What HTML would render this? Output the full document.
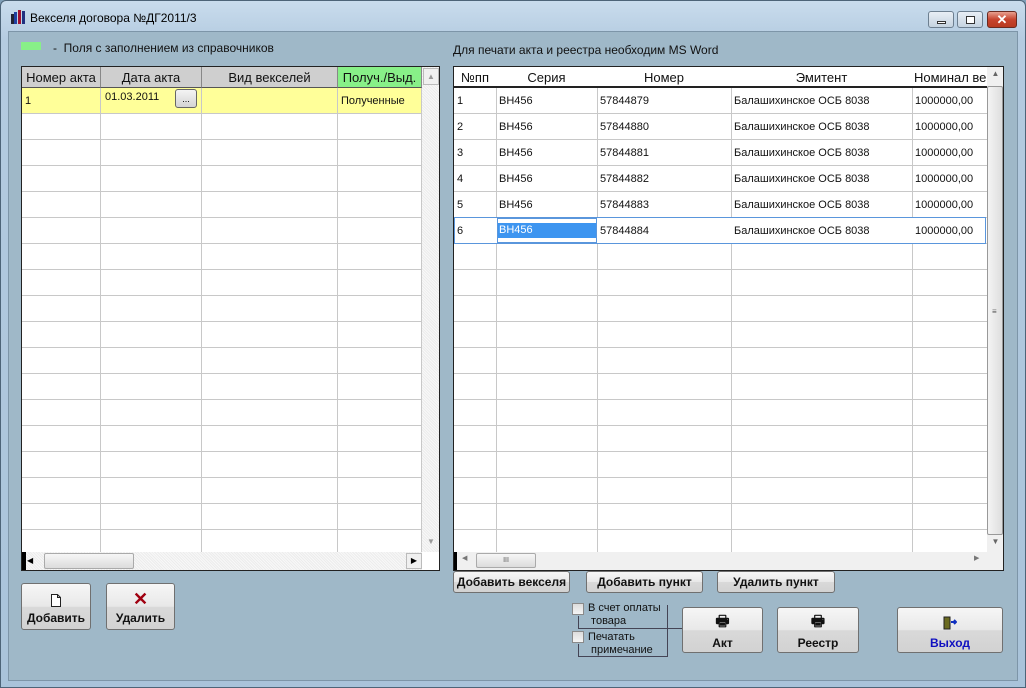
<!DOCTYPE html>
<html><head><meta charset="utf-8">
<style>
*{box-sizing:border-box;margin:0;padding:0}
body{width:1026px;height:688px;overflow:hidden;font-family:"Liberation Sans",sans-serif;background:#7f9fb8;position:relative}
.abs{position:absolute}
.win{left:0;top:0;width:1026px;height:688px;background:linear-gradient(#c9dced,#b4cbe0 40px,#a9c3da);border:1px solid #4d6478;border-radius:6px 6px 0 0}
.client{left:8px;top:31px;width:1010px;height:650px;background:#9fb8c8;border:1px solid #7d95a8}
.grid{background:#fff;border:1px solid #222;overflow:hidden}
.hd{background:#cfcfcf;border-right:1px solid #888;border-bottom:1px solid #555;height:21px;font-size:13px;text-align:center;line-height:21px;color:#111;position:absolute;top:0}
.vl{position:absolute;width:1px;background:#c8c8c8;top:21px;bottom:18px}
.rows{position:absolute;left:0;top:21px;bottom:18px;background:repeating-linear-gradient(#fff 0,#fff 25px,#c8c8c8 25px,#c8c8c8 26px)}
.c{position:absolute;font-size:11px;color:#111;height:26px;line-height:26px;padding-left:3px;white-space:nowrap}
.btn{position:absolute;background:linear-gradient(#f6f6f6,#e8e8e8 50%,#d9d9d9 51%,#d2d2d2);border:1px solid #707070;border-radius:3px;font-size:12px;font-weight:bold;text-align:center;color:#111}
.sb{position:absolute;background:#eaeaea}
.cb{position:absolute;width:12px;height:12px;border:1px solid #8a8a8a;background:linear-gradient(#ddd,#f5f5f5)}
.lbl{position:absolute;font-size:11px;color:#111;line-height:13px}
</style></head><body>
<div class="abs win"></div>
<svg class="abs" style="left:10px;top:9px" width="16" height="16"><rect x="1" y="5" width="3" height="10" fill="#223"/><rect x="4" y="3" width="3" height="12" fill="#2040a0"/><rect x="8" y="1" width="3" height="14" fill="#a01030"/><rect x="12" y="2" width="3" height="13" fill="#203080"/></svg>
<div class="abs" style="left:30px;top:11px;font-size:12px;color:#000">Векселя договора №ДГ2011/3</div>
<div class="abs" style="left:928px;top:11px;width:26px;height:17px;border:1px solid #6d7f90;border-radius:3px;background:linear-gradient(#e8eef5,#c5d3e0)"><div class="abs" style="left:8px;top:9px;width:9px;height:3px;border:1px solid #333;background:#fff"></div></div>
<div class="abs" style="left:957px;top:11px;width:26px;height:17px;border:1px solid #6d7f90;border-radius:3px;background:linear-gradient(#e8eef5,#c5d3e0)"><div class="abs" style="left:8px;top:4px;width:9px;height:8px;border:1px solid #333;background:#fff"></div></div>
<div class="abs" style="left:987px;top:11px;width:30px;height:17px;border:1px solid #6a2a20;border-radius:3px;background:linear-gradient(#e8a090,#c7442e 50%,#b83a20);color:#fff;font-weight:bold;font-size:13px;text-align:center;line-height:16px">✕</div>
<div class="abs client"></div>

<div class="abs" style="left:21px;top:42px;width:20px;height:8px;background:#88f088"></div>
<div class="abs" style="left:53px;top:41px;font-size:12px;color:#111">-&nbsp; Поля с заполнением из справочников</div>
<div class="abs" style="left:453px;top:43px;font-size:12px;color:#111">Для печати акта и реестра необходим MS Word</div>

<div class="abs grid" style="left:21px;top:66px;width:419px;height:505px">
 <div class="rows" style="width:400px"></div>
 <div class="abs" style="left:0;top:21px;width:400px;height:25px;background:#ffff99"></div>
 <div class="hd" style="left:0;width:79px">Номер акта</div>
 <div class="hd" style="left:79px;width:101px">Дата акта</div>
 <div class="hd" style="left:180px;width:136px">Вид векселей</div>
 <div class="hd" style="left:316px;width:84px;background:#88f088">Получ./Выд.</div>
 <div class="vl" style="left:78px"></div><div class="vl" style="left:179px"></div><div class="vl" style="left:315px"></div><div class="vl" style="left:399px"></div>
 <div class="c" style="left:0;top:21px">1</div>
 <div class="c" style="left:80px;top:17px">01.03.2011</div>
 <div class="abs" style="left:153px;top:22px;width:22px;height:19px;border:1px solid #666;border-radius:3px;background:linear-gradient(#f4f4f4,#d4d4d4);font-size:9px;text-align:center;line-height:18px">...</div>
 <div class="c" style="left:316px;top:21px">Полученные</div>
 <div class="sb" style="left:400px;top:0;width:18px;height:485px;background:repeating-linear-gradient(45deg,#ececec 0 1px,#f8f8f8 1px 2px)"></div>
 <div class="abs" style="left:401px;top:1px;width:16px;height:17px;border:1px solid #bbb;background:#f0f0f0;font-size:8px;color:#999;text-align:center;line-height:15px">▲</div>
 <div class="abs" style="left:401px;top:466px;width:16px;height:17px;font-size:8px;color:#999;text-align:center;line-height:17px">▼</div>
 <div class="sb" style="left:0;top:485px;width:400px;height:18px;background:repeating-linear-gradient(45deg,#ececec 0 1px,#f8f8f8 1px 2px)"></div>
 <div class="abs" style="left:0;top:485px;width:4px;height:18px;background:#000"></div>
 <div class="abs" style="left:5px;top:486px;font-size:8px;line-height:16px">◀</div>
 <div class="abs" style="left:22px;top:486px;width:90px;height:16px;border:1px solid #aaa;border-radius:2px;background:linear-gradient(#f6f6f6,#dcdcdc)"></div>
 <div class="abs" style="left:384px;top:486px;width:16px;height:16px;border:1px solid #bbb;background:#f0f0f0;font-size:8px;line-height:14px;text-align:center">▶</div>
</div>

<div class="abs grid" style="left:453px;top:66px;width:551px;height:505px">
 <div class="rows" style="width:533px"></div>
 <div class="hd" style="left:0;width:42px;background:#fff;border-right:none;border-bottom:2px solid #222">№пп</div>
 <div class="hd" style="left:42px;width:101px;background:#fff;border-right:none;border-bottom:2px solid #222">Серия</div>
 <div class="hd" style="left:143px;width:134px;background:#fff;border-right:none;border-bottom:2px solid #222">Номер</div>
 <div class="hd" style="left:277px;width:181px;background:#fff;border-right:none;border-bottom:2px solid #222">Эмитент</div>
 <div class="hd" style="left:458px;width:75px;background:#fff;border-right:none;border-bottom:2px solid #222;text-align:left;padding-left:2px;overflow:hidden;white-space:nowrap">Номинал ве</div>
 <div class="vl" style="left:42px"></div><div class="vl" style="left:143px"></div><div class="vl" style="left:277px"></div><div class="vl" style="left:458px"></div>
 <div class="c" style="left:0;top:21px">1</div><div class="c" style="left:42px;top:21px">ВН456</div><div class="c" style="left:143px;top:21px">57844879</div><div class="c" style="left:277px;top:21px">Балашихинское ОСБ 8038</div><div class="c" style="left:458px;top:21px">1000000,00</div>
 <div class="c" style="left:0;top:47px">2</div><div class="c" style="left:42px;top:47px">ВН456</div><div class="c" style="left:143px;top:47px">57844880</div><div class="c" style="left:277px;top:47px">Балашихинское ОСБ 8038</div><div class="c" style="left:458px;top:47px">1000000,00</div>
 <div class="c" style="left:0;top:73px">3</div><div class="c" style="left:42px;top:73px">ВН456</div><div class="c" style="left:143px;top:73px">57844881</div><div class="c" style="left:277px;top:73px">Балашихинское ОСБ 8038</div><div class="c" style="left:458px;top:73px">1000000,00</div>
 <div class="c" style="left:0;top:99px">4</div><div class="c" style="left:42px;top:99px">ВН456</div><div class="c" style="left:143px;top:99px">57844882</div><div class="c" style="left:277px;top:99px">Балашихинское ОСБ 8038</div><div class="c" style="left:458px;top:99px">1000000,00</div>
 <div class="c" style="left:0;top:125px">5</div><div class="c" style="left:42px;top:125px">ВН456</div><div class="c" style="left:143px;top:125px">57844883</div><div class="c" style="left:277px;top:125px">Балашихинское ОСБ 8038</div><div class="c" style="left:458px;top:125px">1000000,00</div>
 <div class="abs" style="left:0;top:150px;width:532px;height:27px;border:1px solid #5a96dc;background:#fff"></div>
 <div class="abs" style="left:43px;top:151px;width:100px;height:25px;border:1px solid #5a96dc;background:#fff"><div class="abs" style="left:0;top:4px;width:98px;height:15px;background:#3d95f0"></div></div>
 <div class="c" style="left:0;top:151px">6</div><div class="c" style="left:42px;top:150px;color:#fff">ВН456</div><div class="c" style="left:143px;top:151px">57844884</div><div class="c" style="left:277px;top:151px">Балашихинское ОСБ 8038</div><div class="c" style="left:458px;top:151px">1000000,00</div>
 <div class="sb" style="left:533px;top:0;width:17px;height:485px;background:#f0f0f0"></div>
 <div class="abs" style="left:533px;top:2px;width:17px;font-size:8px;color:#666;text-align:center">▲</div>
 <div class="abs" style="left:533px;top:19px;width:16px;height:449px;border:1px solid #999;border-radius:2px;background:linear-gradient(90deg,#f4f4f4,#dedede)"><div class="abs" style="left:4px;top:220px;font-size:8px;color:#555">≡</div></div>
 <div class="abs" style="left:533px;top:470px;width:17px;font-size:8px;color:#666;text-align:center">▼</div>
 <div class="sb" style="left:0;top:485px;width:550px;height:18px;background:#f0f0f0"></div>
 <div class="abs" style="left:0;top:485px;width:3px;height:18px;background:#000"></div>
 <div class="abs" style="left:8px;top:487px;font-size:7px;color:#777">◀</div>
 <div class="abs" style="left:22px;top:486px;width:60px;height:15px;border:1px solid #aaa;border-radius:2px;background:linear-gradient(#f6f6f6,#dcdcdc);font-size:7px;text-align:center;line-height:13px;color:#555">III</div>
 <div class="abs" style="left:520px;top:487px;font-size:7px;color:#777">▶</div>
</div>

<div class="btn" style="left:21px;top:583px;width:70px;height:47px"><svg class="abs" style="left:29px;top:10px" width="10" height="13"><path d="M.5 .5h6l3 3v9h-9z M6.5 .5v3h3" fill="#fff" stroke="#222"/></svg><div class="abs" style="left:0;right:0;top:27px;font-size:12px">Добавить</div></div>
<div class="btn" style="left:106px;top:583px;width:69px;height:47px"><div class="abs" style="left:0;right:0;top:5px;color:#a00010;font-size:18px;font-weight:bold">✕</div><div class="abs" style="left:0;right:0;top:27px;font-size:12px">Удалить</div></div>

<div class="btn" style="left:453px;top:571px;width:117px;height:22px;line-height:20px">Добавить векселя</div>
<div class="btn" style="left:586px;top:571px;width:117px;height:22px;line-height:20px">Добавить пункт</div>
<div class="btn" style="left:717px;top:571px;width:118px;height:22px;line-height:20px">Удалить пункт</div>

<div class="cb" style="left:572px;top:603px"></div>
<div class="lbl" style="left:588px;top:602px">В счет оплаты<br>&nbsp;товара</div>
<div class="cb" style="left:572px;top:631px"></div>
<div class="lbl" style="left:588px;top:631px">Печатать<br>&nbsp;примечание</div>
<div class="abs" style="left:578px;top:616px;width:1px;height:12px;background:#445"></div>
<div class="abs" style="left:578px;top:628px;width:104px;height:1px;background:#445"></div>
<div class="abs" style="left:578px;top:644px;width:1px;height:13px;background:#445"></div>
<div class="abs" style="left:578px;top:656px;width:90px;height:1px;background:#445"></div>
<div class="abs" style="left:667px;top:605px;width:1px;height:52px;background:#445"></div>

<div class="btn" style="left:682px;top:607px;width:81px;height:46px"><div class="abs" style="left:0;right:0;top:3px;font-size:15px">🖶</div><div class="abs" style="left:0;right:0;top:28px">Акт</div></div>
<div class="btn" style="left:777px;top:607px;width:82px;height:46px"><div class="abs" style="left:0;right:0;top:3px;font-size:15px">🖶</div><div class="abs" style="left:0;right:0;top:28px">Реестр</div></div>
<div class="btn" style="left:897px;top:607px;width:106px;height:46px"><svg class="abs" style="left:45px;top:8px" width="14" height="14"><rect x="1" y="1" width="6" height="12" fill="#6a6a20" stroke="#222"/><path d="M8 6h5M11 4l2 2-2 2" stroke="#1030c0" stroke-width="2" fill="none"/></svg><div class="abs" style="left:0;right:0;top:28px;color:#1010c0">Выход</div></div>
</body></html>
